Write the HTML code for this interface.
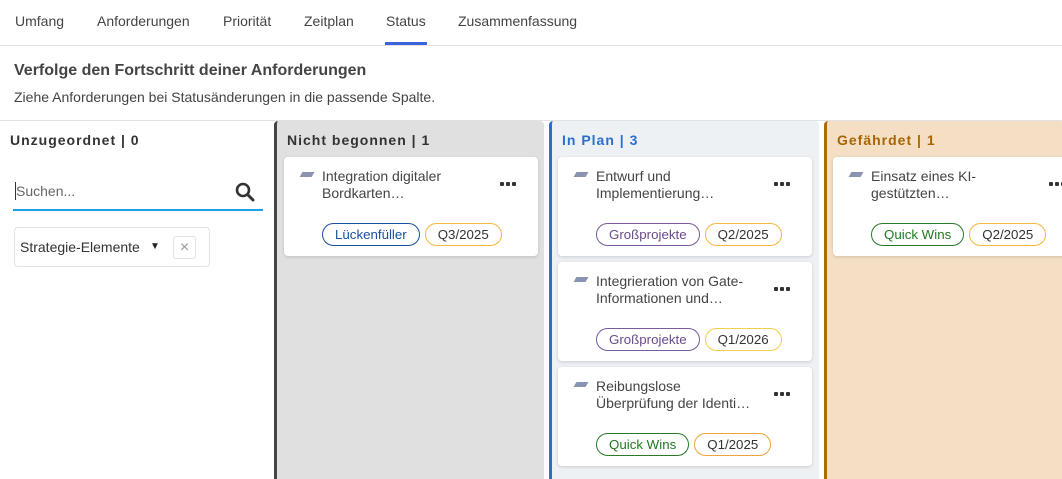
<!DOCTYPE html>
<html><head><meta charset="utf-8"><style>
*{box-sizing:border-box;margin:0;padding:0}
body{width:1062px;height:479px;overflow:hidden;background:#fff;font-family:"Liberation Sans",Arial,sans-serif;color:#333;position:relative}
.abs{position:absolute}
.tab{position:absolute;top:13px;font-size:14px;color:#444}
.col{position:absolute;top:121px;height:358px;border-left:3px solid;border-radius:4px 4px 0 0}
.ch{position:absolute;left:10px;top:11px;font-size:14px;font-weight:bold;letter-spacing:1px}
.card{position:absolute;width:254px;height:99px;background:#fff;border-radius:4px;box-shadow:0 1px 3px rgba(0,0,0,.15)}
.ic{position:absolute;left:17px;top:15px;width:12px;height:5px;background:#8a93b0;transform:skewX(-30deg)}
.tt{position:absolute;left:38px;top:11px;font-size:14px;line-height:17px;color:#444;white-space:nowrap}
.dots{position:absolute;left:216px;top:25px;display:flex;gap:2px}
.dots i{width:4px;height:4px;background:#333;border-radius:1px;display:block}
.pills{position:absolute;left:38px;top:66px;display:flex;gap:5px}
.p{height:23px;border:1px solid;border-radius:12px;font-size:13.3px;line-height:21px;padding:0 12px;color:#333}
</style></head><body>
<div class="tab" style="left:15px">Umfang</div>
<div class="tab" style="left:97px">Anforderungen</div>
<div class="tab" style="left:223px">Priorität</div>
<div class="tab" style="left:304px">Zeitplan</div>
<div class="tab" style="left:386px">Status</div>
<div class="tab" style="left:458px">Zusammenfassung</div>
<div class="abs" style="left:385px;top:42px;width:42px;height:3px;background:#3b63e0"></div>
<div class="abs" style="left:0;top:45px;width:1062px;height:1px;background:#e2e2e2"></div>
<div class="abs" style="left:14px;top:62px;font-size:16px;font-weight:bold;color:#444">Verfolge den Fortschritt deiner Anforderungen</div>
<div class="abs" style="left:14px;top:89px;font-size:14px;color:#444">Ziehe Anforderungen bei Statusänderungen in die passende Spalte.</div>
<div class="abs" style="left:0;top:120px;width:1062px;height:1px;background:#e2e2e2"></div>

<div class="abs" style="left:10px;top:132px;font-size:14px;font-weight:bold;color:#333;letter-spacing:1px">Unzugeordnet | 0</div>
<div class="abs" style="left:16px;top:183px;font-size:14px;color:#666">Suchen...</div>
<div class="abs" style="left:15px;top:182px;width:1px;height:18px;background:#333"></div>
<svg class="abs" style="left:235px;top:182px" width="20" height="20" viewBox="0 0 20 20"><circle cx="8" cy="8" r="6" fill="none" stroke="#333" stroke-width="2.6"/><line x1="12.5" y1="12.5" x2="18" y2="18" stroke="#333" stroke-width="3" stroke-linecap="round"/></svg>
<div class="abs" style="left:13px;top:209px;width:250px;height:2px;background:#1ea0f0"></div>
<div class="abs" style="left:14px;top:227px;width:196px;height:40px;border:1px solid #e2e2e2;border-radius:4px"></div>
<div class="abs" style="left:20px;top:239px;font-size:14px;color:#333">Strategie-Elemente</div>
<div class="abs" style="left:150px;top:241px;font-size:10px;color:#222">▼</div>
<div class="abs" style="left:173px;top:236px;width:23px;height:23px;border:1px solid #e2e2e2;border-radius:3px;color:#999;font-size:16px;text-align:center;line-height:21px">×</div>

<div class="col" style="left:274px;width:270px;background:#e0e0e0;border-color:#444">
<div class="ch" style="color:#333">Nicht begonnen | 1</div>
<div class="card" style="left:7px;top:36px"><div class="ic"></div><div class="tt">Integration digitaler<br>Bordkarten…</div><div class="dots"><i></i><i></i><i></i></div>
<div class="pills"><div class="p" style="border-color:#1b4fa0;color:#1b4fa0">Lückenfüller</div><div class="p" style="border-color:#f5b73d">Q3/2025</div></div></div>
</div>

<div class="col" style="left:549px;width:270px;background:#edf1f4;border-color:#2a6ed0">
<div class="ch" style="color:#2a6ed0">In Plan | 3</div>
<div class="card" style="left:6px;top:36px"><div class="ic"></div><div class="tt">Entwurf und<br>Implementierung…</div><div class="dots"><i></i><i></i><i></i></div>
<div class="pills"><div class="p" style="border-color:#7a5a9a;color:#6a4a8a">Großprojekte</div><div class="p" style="border-color:#f5b73d">Q2/2025</div></div></div>
<div class="card" style="left:6px;top:141px"><div class="ic"></div><div class="tt">Integrieration von Gate-<br>Informationen und…</div><div class="dots"><i></i><i></i><i></i></div>
<div class="pills"><div class="p" style="border-color:#7a5a9a;color:#6a4a8a">Großprojekte</div><div class="p" style="border-color:#f3cf4a">Q1/2026</div></div></div>
<div class="card" style="left:6px;top:246px"><div class="ic"></div><div class="tt">Reibungslose<br>Überprüfung der Identi…</div><div class="dots"><i></i><i></i><i></i></div>
<div class="pills"><div class="p" style="border-color:#2a7a2a;color:#1f7a1f">Quick Wins</div><div class="p" style="border-color:#eba53a">Q1/2025</div></div></div>
</div>

<div class="col" style="left:824px;width:240px;background:#f5dfc4;border-color:#b06a00">
<div class="ch" style="color:#a86400">Gefährdet | 1</div>
<div class="card" style="left:6px;top:36px"><div class="ic"></div><div class="tt">Einsatz eines KI-<br>gestützten…</div><div class="dots"><i></i><i></i><i></i></div>
<div class="pills"><div class="p" style="border-color:#2a7a2a;color:#1f7a1f">Quick Wins</div><div class="p" style="border-color:#f5b73d">Q2/2025</div></div></div>
</div>
</body></html>
